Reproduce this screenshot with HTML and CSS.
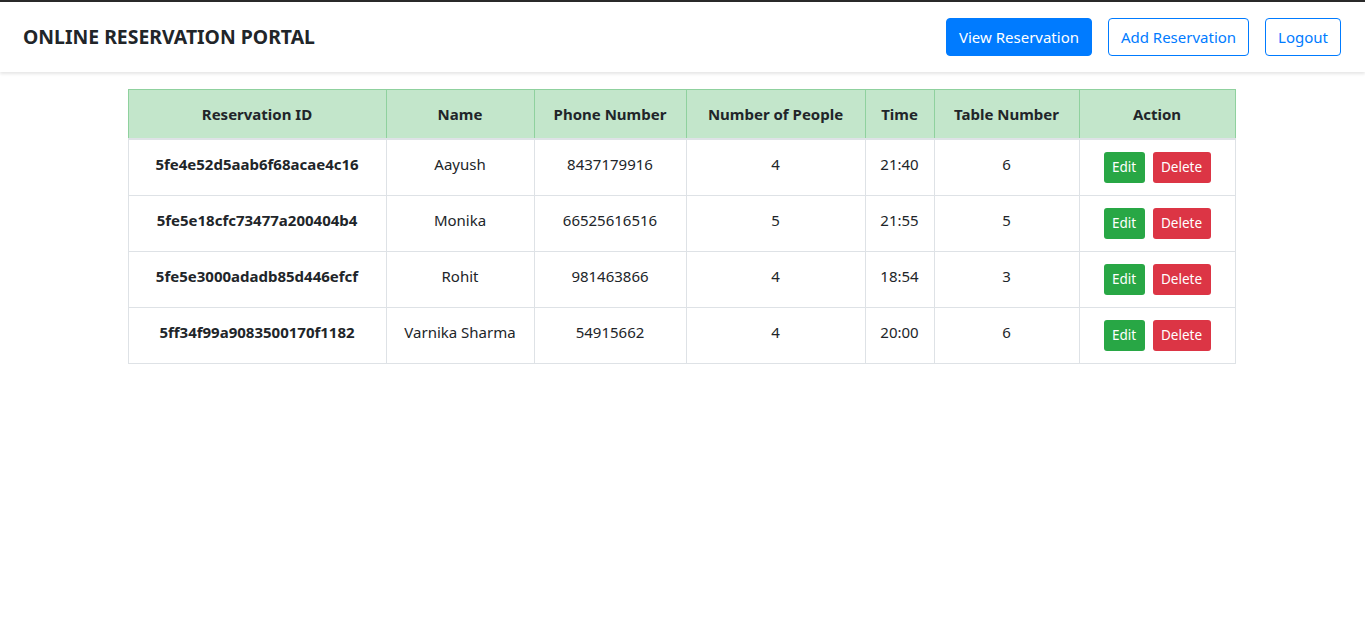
FILE: index.html
```html
<!DOCTYPE html>
<html lang="en">
<head>
<meta charset="utf-8">
<title>Online Reservation Portal</title>
<link rel="stylesheet" href="styles.css">
</head>
<body>
<div class="topline"></div>
<nav class="navbar">
  <div class="brand">ONLINE RESERVATION PORTAL</div>
  <div class="nav-actions">
    <a class="btn btn-primary" href="#">View Reservation</a>
    <a class="btn btn-outline btn-add" href="#">Add Reservation</a>
    <a class="btn btn-outline btn-logout" href="#">Logout</a>
  </div>
</nav>
<main class="container">
  <table class="table">
    <thead>
      <tr>
        <th class="c-id">Reservation ID</th>
        <th class="c-name">Name</th>
        <th class="c-phone">Phone Number</th>
        <th class="c-people">Number of People</th>
        <th class="c-time">Time</th>
        <th class="c-table">Table Number</th>
        <th class="c-action">Action</th>
      </tr>
    </thead>
    <tbody>
      <tr>
        <td class="rid">5fe4e52d5aab6f68acae4c16</td>
        <td>Aayush</td>
        <td>8437179916</td>
        <td>4</td>
        <td>21:40</td>
        <td>6</td>
        <td><div class="actions"><a class="btn-sm btn-success" href="#">Edit</a><a class="btn-sm btn-danger" href="#">Delete</a></div></td>
      </tr>
      <tr>
        <td class="rid">5fe5e18cfc73477a200404b4</td>
        <td>Monika</td>
        <td>66525616516</td>
        <td>5</td>
        <td>21:55</td>
        <td>5</td>
        <td><div class="actions"><a class="btn-sm btn-success" href="#">Edit</a><a class="btn-sm btn-danger" href="#">Delete</a></div></td>
      </tr>
      <tr>
        <td class="rid">5fe5e3000adadb85d446efcf</td>
        <td>Rohit</td>
        <td>981463866</td>
        <td>4</td>
        <td>18:54</td>
        <td>3</td>
        <td><div class="actions"><a class="btn-sm btn-success" href="#">Edit</a><a class="btn-sm btn-danger" href="#">Delete</a></div></td>
      </tr>
      <tr>
        <td class="rid">5ff34f99a9083500170f1182</td>
        <td>Varnika Sharma</td>
        <td>54915662</td>
        <td>4</td>
        <td>20:00</td>
        <td>6</td>
        <td><div class="actions"><a class="btn-sm btn-success" href="#">Edit</a><a class="btn-sm btn-danger" href="#">Delete</a></div></td>
      </tr>
    </tbody>
  </table>
</main>
</body>
</html>
```
FILE: styles.css
```css
* { box-sizing: border-box; }

body {
  margin: 0;
  font-family: "Noto Sans", "Open Sans", sans-serif;
  font-size: 15px;
  line-height: 24px;
  color: #212529;
  background: #fff;
}

.topline {
  height: 2px;
  background: #2a2a2a;
}

.navbar {
  display: flex;
  align-items: center;
  justify-content: space-between;
  height: 70px;
  padding: 0 24px 0 23px;
  background: #fff;
  box-shadow: 0 2px 3px rgba(0, 0, 0, 0.1);
  position: relative;
}

.brand {
  font-size: 19.4px;
  font-weight: 700;
  color: #212529;
  white-space: nowrap;
}

.nav-actions {
  display: flex;
  gap: 16px;
}

.btn {
  display: inline-block;
  height: 38px;
  line-height: 24px;
  padding: 6px 0;
  font-size: 15px;
  border: 1px solid #007bff;
  border-radius: 4px;
  text-decoration: none;
  text-align: center;
  white-space: nowrap;
}

.btn-primary {
  background: #007bff;
  color: #fff;
  width: 146px;
}

.btn-outline {
  background: #fff;
  color: #007bff;
}

.btn-add { width: 141px; }
.btn-logout { width: 76px; }

.container {
  width: 1110px;
  margin: 17px auto 0;
}

.table {
  width: 1107px;
  border-collapse: collapse;
  table-layout: fixed;
}

.table th,
.table td {
  padding: 12px;
  text-align: center;
  vertical-align: top;
  border: 1px solid #dee2e6;
}

.table thead th {
  background: #c3e6cb;
  border-color: #8fd19e;
  border-bottom: 2px solid #dee2e6;
  font-weight: 700;
  height: 49px;
}

.table tbody td { height: 56px; }

.c-id { width: 258px; }
.c-name { width: 148px; }
.c-phone { width: 152px; }
.c-people { width: 179px; }
.c-time { width: 69px; }
.c-table { width: 145px; }
.c-action { width: 156px; }

.rid { font-weight: 700; }

.actions {
  display: flex;
  justify-content: center;
  gap: 8px;
}

.btn-sm {
  display: inline-block;
  height: 31px;
  padding: 4px 0;
  font-size: 13.5px;
  line-height: 23px;
  border-radius: 3px;
  color: #fff;
  text-decoration: none;
  text-align: center;
}

.btn-success { background: #28a745; width: 41px; }
.btn-danger { background: #dc3545; width: 58px; }
```
